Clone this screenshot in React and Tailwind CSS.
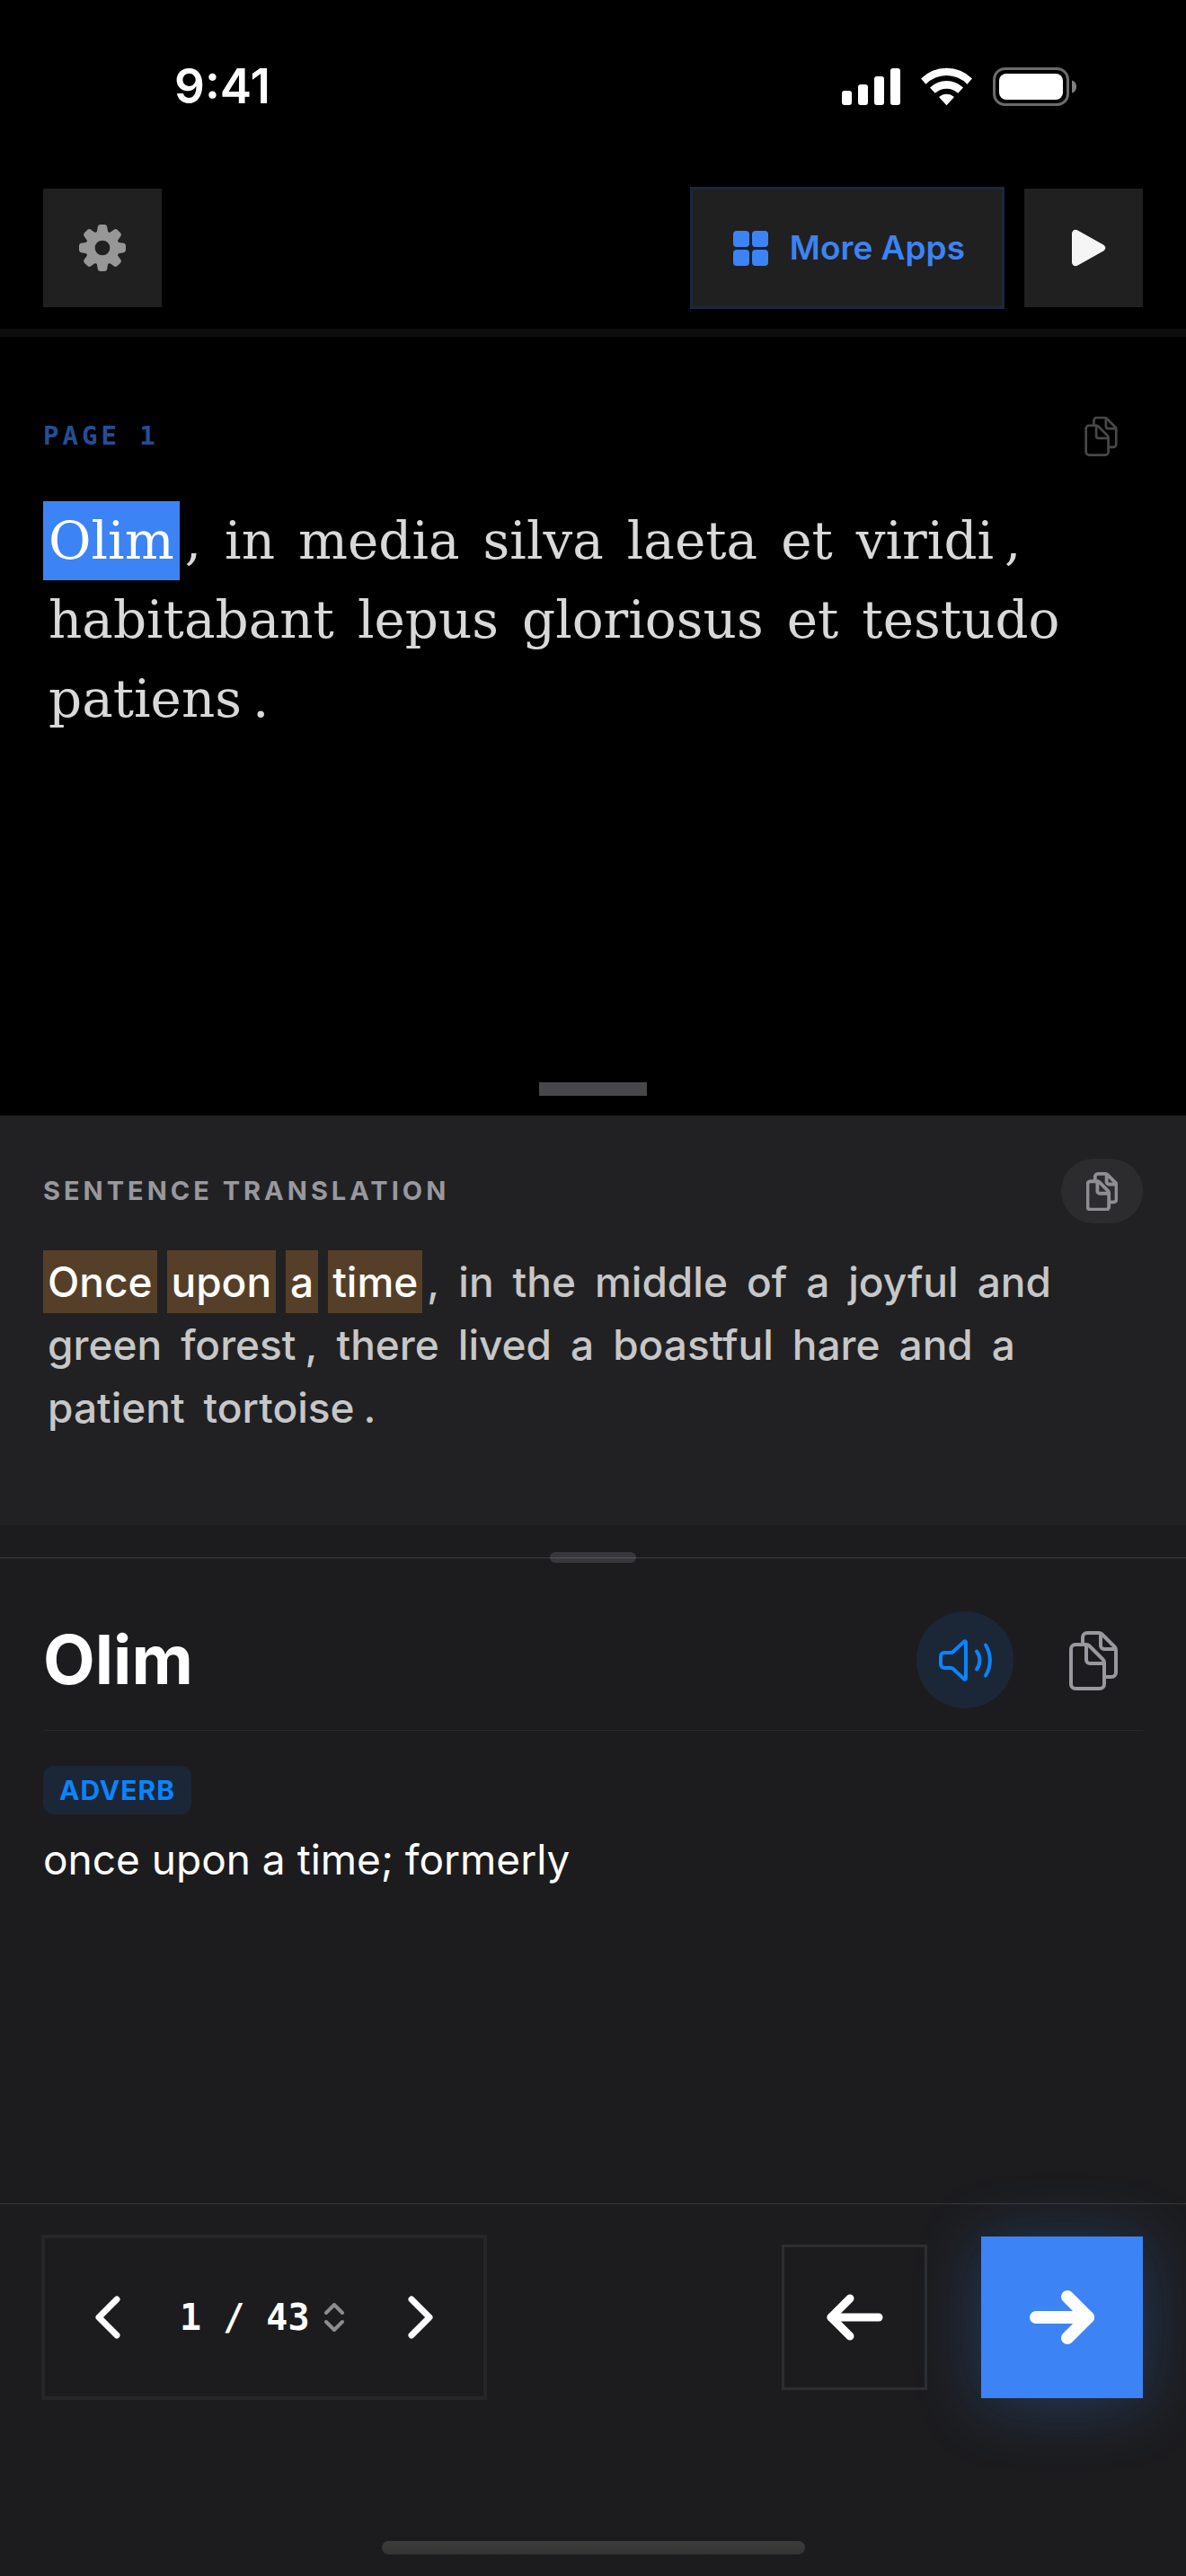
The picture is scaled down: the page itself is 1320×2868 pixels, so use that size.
import React, { useState } from 'react';

const TOTAL_PAGES = 43;

const LATIN = ['Olim', ',', 'in', 'media', 'silva', 'laeta', 'et', 'viridi', ',', 'habitabant', 'lepus', 'gloriosus', 'et', 'testudo', 'patiens', '.'];

const ENGLISH = [
  'Once', 'upon', 'a', 'time', ',', 'in', 'the', 'middle', 'of', 'a', 'joyful', 'and',
  'green', 'forest', ',', 'there', 'lived', 'a', 'boastful', 'hare', 'and', 'a',
  'patient', 'tortoise', '.'
];

// english words that belong to the selected latin word
const HIGHLIGHTED = [0, 1, 2, 3];

const isPunctuation = (token) => token === ',' || token === '.';

function CopyIcon({ className, strokeWidth = 4 }) {
  return (
    <svg viewBox="0 0 54 67" className={className} fill="none" stroke="currentColor" strokeWidth={strokeWidth} strokeLinecap="round" strokeLinejoin="round">
      <path d="M19 16H7a5 5 0 0 0-5 5v39a5 5 0 0 0 5 5h27a5 5 0 0 0 5-5V36c0-1.500-.5-2.500-1.500-3.500l-15-15C21.500 16.500 20.500 16 19 16z" />
      <path d="M19 16v17a4 4 0 0 0 4 4h16" />
      <path d="M15 15V8a5 5 0 0 1 5-5h13c1.500 0 2.500.5 3.500 1.500l14 14c1 1 1.500 2 1.500 3.500v25a5 5 0 0 1-5 5h-6" />
      <path d="M35 4v13a4 4 0 0 0 4 4h12" />
    </svg>
  );
}

function GearIcon({ className }) {
  return (
    <svg viewBox="0 0 51 51" className={className} fill="currentColor">
      <path fillRule="evenodd" d="M25.500 7a18.500 18.500 0 1 0 0 37a18.500 18.500 0 1 0 0-37zM25.500 17.300a8.200 8.200 0 1 1 0 16.400a8.200 8.200 0 1 1 0-16.400z" />
      {[0, 45, 90, 135, 180, 225, 270, 315].map((angle) => (
        <path
          key={angle}
          transform={`rotate(${angle} 25.5 25.5)`}
          d="M17.500 12C19.500 9.500 19.800 6 20.200 3.500C20.500 1 21.500 0 23.500 0h4C29.500 0 30.500 1 30.800 3.500C31.200 6 31.500 9.500 33.500 12z"
        />
      ))}
    </svg>
  );
}

function SpeakerIcon({ className }) {
  return (
    <svg viewBox="0 0 59 47" className={className} fill="none" stroke="currentColor" strokeWidth="4" strokeLinecap="round" strokeLinejoin="round">
      <path d="M6 15h7.500c1 0 1.600-.3 2.300-1L28 2.600c.9-.8 2-.3 2 .9v40c0 1.200-1.100 1.700-2 .9L15.800 33c-.7-.7-1.300-1-2.300-1H6a4 4 0 0 1-4-4v-9a4 4 0 0 1 4-4z" />
      <path d="M42 13.500c4.500 6 4.500 14 0 20" />
      <path d="M52 6.500c6.500 10.500 6.500 23.500 0 34" />
    </svg>
  );
}

function StatusBar() {
  return (
    <div className="flex h-[192px] items-center justify-between pl-[194px] pr-[122px] text-white">
      <span className="text-[53px] leading-[64px] font-semibold">9:41</span>
      <div className="flex items-center gap-[23px]">
        <svg viewBox="0 0 65 43" className="h-[43px] w-[65px]" fill="currentColor">
          <rect x="0" y="26" width="11" height="16" rx="3" />
          <rect x="18" y="19" width="11" height="23" rx="3" />
          <rect x="36" y="10" width="11" height="32" rx="3" />
          <rect x="54" y="1" width="11" height="41" rx="3" />
        </svg>
        <svg viewBox="0 0 57 43" className="h-[43px] w-[57px]" fill="currentColor">
          <path d="M0 12.500a40.500 40.500 0 0 1 57 0l-5.500 6.300a32 32 0 0 0-46 0z" />
          <path d="M10 22.500a26.500 26.500 0 0 1 37 0l-5.700 6.300a18.500 18.500 0 0 0-25.600 0z" />
          <path d="M20 33a12.500 12.500 0 0 1 17 0l-8.500 9.300z" />
        </svg>
        <svg viewBox="0 0 93 43" className="h-[43px] w-[93px]">
          <rect x="1.500" y="1.500" width="82" height="40" rx="12" fill="none" stroke="#6b6b6b" strokeWidth="3" />
          <rect x="7" y="7" width="71" height="29" rx="8" fill="#fff" />
          <path d="M88 14.500c3.500 1 5 4 5 7s-1.500 6-5 7z" fill="#808080" />
        </svg>
      </div>
    </div>
  );
}

export default function App() {
  const [page, setPage] = useState(1);
  const [selected, setSelected] = useState(0);

  const prevPage = () => setPage(Math.max(1, page - 1));
  const nextPage = () => setPage(Math.min(TOTAL_PAGES, page + 1));

  return (
    <div className="flex min-h-screen flex-col bg-[#1c1c1e] font-['Inter',sans-serif]">
      <div className="bg-black">
        <StatusBar />
        <header className="flex items-center justify-between border-b-[9px] border-[#0e0e0e] px-12 pt-[18px] pb-6">
          <button type="button" aria-label="Settings" className="flex size-[132px] items-center justify-center bg-[#202020] text-[#979797]">
            <GearIcon className="size-[52px]" />
          </button>
          <div className="flex items-center gap-6">
            <button type="button" className="flex h-[132px] items-center gap-6 bg-[#202020] pr-[42px] pl-[46px] text-[#3c83f6] outline-3 -outline-offset-1 outline-[#1a2840]">
              <svg viewBox="0 0 39 39" className="size-[39px]" fill="currentColor">
                <rect width="18" height="18" rx="4" />
                <rect x="21" width="18" height="18" rx="4" />
                <rect y="21" width="18" height="18" rx="4" />
                <rect x="21" y="21" width="18" height="18" rx="4" />
              </svg>
              <span className="text-[37px] leading-[48px] font-semibold">More Apps</span>
            </button>
            <button type="button" aria-label="Play" className="flex size-[132px] items-center justify-center bg-[#202020] text-[#f5f5f5]">
              <svg viewBox="0 0 42 42" className="ml-3 size-[42px]" fill="currentColor">
                <path d="M2 5c0-3.500 3.500-5.300 6.500-3.500L37 17.500c3 2 3 5 0 7L8.500 40.500C5.500 42.300 2 40.500 2 37z" />
              </svg>
            </button>
          </div>
        </header>
      </div>

      <main className="flex min-h-[867px] flex-col bg-black px-12 pt-[72px]">
        <div className="flex h-[76px] items-center justify-between">
          <h1 className="font-['DejaVu_Sans_Mono',monospace] text-[29px] leading-[40px] font-bold tracking-[4px] text-[#234f94]">PAGE {page}</h1>
          <button type="button" aria-label="Copy page" className="flex h-[72px] items-center px-7 text-[#48484a]">
            <CopyIcon className="h-[45px] w-[37px]" />
          </button>
        </div>
        <p className="mt-[35px] flex flex-wrap font-['DejaVu_Serif',serif] text-[58px] leading-[88px] text-[#d9d9d9]">
          {LATIN.map((token, i) => (
            <span
              key={i}
              onClick={() => setSelected(i)}
              className={`px-[6px] ${isPunctuation(LATIN[i + 1]) ? '' : 'mr-[14px]'} ${i === selected ? 'bg-[#3c83f6] text-white' : ''}`}
            >
              {token}
            </span>
          ))}
        </p>
        <div className="mt-auto mb-[22px] h-[15px] w-[120px] self-center bg-[#48484a]" />
      </main>

      <section className="bg-[#212123] px-12 pt-12 pb-24">
        <div className="flex items-center justify-between">
          <h2 className="text-[29px] leading-[40px] font-bold tracking-[4px] text-[#98989f]">SENTENCE TRANSLATION</h2>
          <button type="button" aria-label="Copy translation" className="flex h-[72px] items-center rounded-full bg-[#2c2c2e] px-7 text-[#8e8e93]">
            <CopyIcon className="h-[43px] w-[35px]" strokeWidth={6} />
          </button>
        </div>
        <p className="mt-[30px] flex flex-wrap text-[46px] leading-[70px] font-medium text-[#c7c7c8]">
          {ENGLISH.map((token, i) => (
            <span
              key={i}
              className={`px-[5px] ${isPunctuation(ENGLISH[i + 1]) ? '' : 'mr-[11px]'} ${HIGHLIGHTED.includes(i) ? 'bg-[#553f28] text-white' : ''}`}
            >
              {token}
            </span>
          ))}
        </p>
      </section>

      {/* drag handle between the reader and the dictionary */}
      <div className="relative flex h-[72px] items-center justify-center">
        <div className="h-3 w-24 rounded-full bg-[#38373b]" />
        <div className="absolute inset-x-0 top-1/2 h-px bg-white/15" />
      </div>

      <section className="flex-1 px-12 pt-6">
        <div className="flex items-center justify-between border-b border-[#29292b] pb-6">
          <h2 className="text-[75px] leading-[96px] font-bold text-white">Olim</h2>
          <div className="flex items-center gap-[34px]">
            <button type="button" aria-label="Listen" className="flex size-[108px] items-center justify-center rounded-full bg-[#1b2737] text-[#0a84ff]">
              <SpeakerIcon className="h-[47px] w-[59px]" />
            </button>
            <button type="button" aria-label="Copy word" className="flex h-[108px] items-center px-7 text-[#98989f]">
              <CopyIcon className="h-[67px] w-[54px]" />
            </button>
          </div>
        </div>
        <span className="mt-[39px] inline-block rounded-xl bg-[#1b2737] px-[18px] text-[30px] leading-[54px] font-bold tracking-[1px] text-[#0a84ff]">ADVERB</span>
        <p className="mt-5 text-[46px] leading-[60px] text-white">once upon a time; formerly</p>
      </section>

      <footer className="border-t border-[#3a3a3c] px-12 pt-9 pb-6">
        <div className="flex items-center justify-between">
          <div className="flex h-[180px] items-center text-white outline-4 -outline-offset-2 outline-[#262628]">
            <button type="button" aria-label="Previous chapter page" onClick={prevPage} className="flex h-full w-36 items-center justify-center">
              <svg viewBox="0 0 28 48" className="h-[60px] w-7" fill="none" stroke="currentColor" strokeWidth="7" strokeLinecap="round" strokeLinejoin="round">
                <path d="M24 4L4 24L24 44" />
              </svg>
            </button>
            <button type="button" aria-label="Go to page" className="flex h-full w-[204px] items-center gap-4 pl-2 font-['DejaVu_Sans_Mono',monospace] text-[40px] leading-[48px] font-bold">
              <span>{page} / {TOTAL_PAGES}</span>
              <svg viewBox="0 0 22 32" className="h-8 w-[22px] text-[#8d8d8e]" fill="none" stroke="currentColor" strokeWidth="4" strokeLinecap="round" strokeLinejoin="round">
                <path d="M2 11L11 2L20 11" />
                <path d="M2 21L11 30L20 21" />
              </svg>
            </button>
            <button type="button" aria-label="Next chapter page" onClick={nextPage} className="flex h-full w-36 items-center justify-center">
              <svg viewBox="0 0 28 48" className="h-[60px] w-7" fill="none" stroke="currentColor" strokeWidth="7" strokeLinecap="round" strokeLinejoin="round">
                <path d="M4 4L24 24L4 44" />
              </svg>
            </button>
          </div>

          <div className="flex items-center gap-[60px]">
            <button type="button" aria-label="Back" onClick={prevPage} className="flex size-[162px] items-center justify-center border-3 border-[#2e2e30] text-white">
              <svg viewBox="0 0 63 52" className="h-[52px] w-[63px]" fill="none" stroke="currentColor" strokeWidth="9" strokeLinecap="round" strokeLinejoin="round">
                <path d="M26 5L5 26L26 47" />
                <path d="M5 26H58" />
              </svg>
            </button>
            <button type="button" aria-label="Next" onClick={nextPage} className="flex size-[180px] items-center justify-center bg-[#3c83f6] text-white shadow-[0_6px_72px_rgba(60,131,246,0.3)]">
              <svg viewBox="0 0 72 60" className="h-[60px] w-[72px]" fill="none" stroke="currentColor" strokeWidth="14" strokeLinecap="round" strokeLinejoin="round">
                <path d="M42 7L65 30L42 53" />
                <path d="M7 30H65" />
              </svg>
            </button>
          </div>
        </div>
        <div className="mx-auto mt-[159px] h-[15px] w-[471px] rounded-full bg-gradient-to-b from-[#3c3c3c] to-[#343434]" />
      </footer>
    </div>
  );
}
